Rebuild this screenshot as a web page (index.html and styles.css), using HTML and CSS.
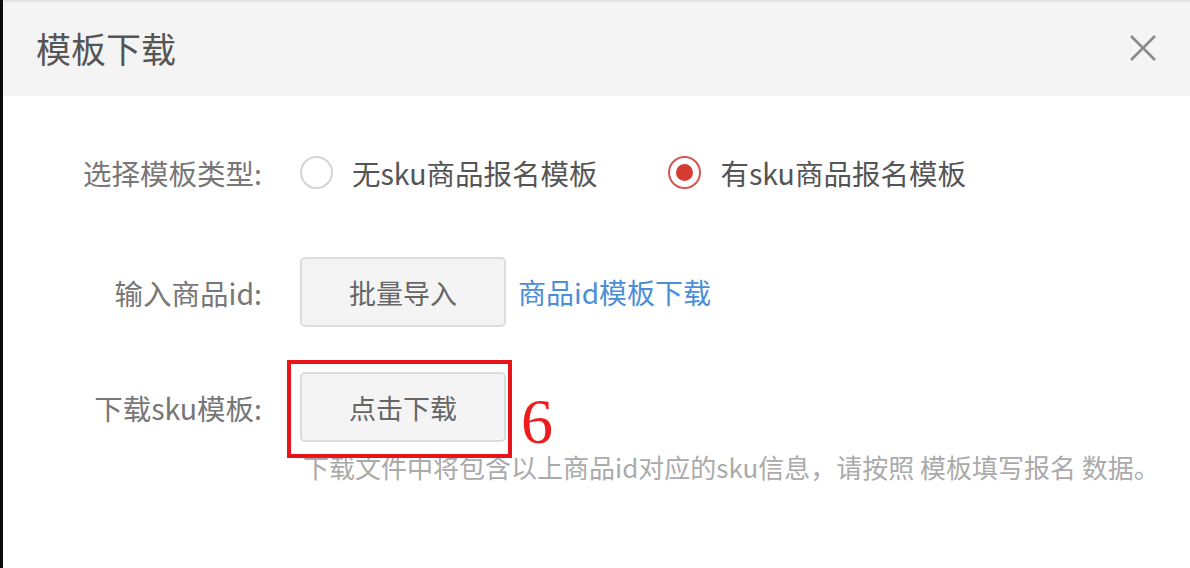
FILE: index.html
```html
<!DOCTYPE html>
<html lang="zh-CN">
<head>
<meta charset="utf-8">
<title>模板下载</title>
<link rel="stylesheet" href="styles.css">
</head>
<body>
<div class="dialog">
  <div class="header">
    <span class="title">模板下载</span>
    <svg class="close" width="28" height="28" viewBox="0 0 28 28"><path d="M2 2 L26 26 M26 2 L2 26" stroke="#8a8a8a" stroke-width="2.6" fill="none"/></svg>
  </div>
  <div class="body">
    <div class="row row1">
      <div class="label">选择模板类型:</div>
      <div class="controls">
        <span class="radio"></span><span class="opt">无sku商品报名模板</span>
        <span class="radio checked"></span><span class="opt">有sku商品报名模板</span>
      </div>
    </div>
    <div class="row row2">
      <div class="label">输入商品id:</div>
      <div class="controls">
        <span class="btn">批量导入</span><span class="link">商品id模板下载</span>
      </div>
    </div>
    <div class="row row3">
      <div class="label">下载sku模板:</div>
      <div class="controls">
        <span class="btn-wrap"><span class="btn">点击下载</span><span class="mark"></span><span class="num">6</span></span>
      </div>
    </div>
    <div class="hint">下载文件中将包含以上商品id对应的sku信息，请按照 模板填写报名 数据。</div>
  </div>
</div>
</body>
</html>
```
FILE: styles.css
```css
html, body { margin: 0; padding: 0; background: #fff; }
body { font-family: "Noto Sans CJK SC", "Noto Sans", sans-serif; }
.dialog { width: 1187px; height: 568px; border-left: 3px solid #0b0b0b; overflow: hidden; }
.header { height: 94px; border-top: 2px solid #e3e3e3; background: #f4f4f4; display: flex; align-items: center; justify-content: space-between; padding: 0 33px 0 33px; box-sizing: content-box; }
.title { font-size: 35px; color: #555; line-height: 1; margin-top: -4px; }
.close { margin-top: -2px; }
.body { padding-top: 41px; }
.row { display: flex; align-items: center; height: 70px; }
.row2 { margin-top: 50px; }
.row3 { margin-top: 45px; }
.label { width: 259px; text-align: right; font-size: 28.5px; color: #777; }
.controls { display: flex; align-items: center; margin-left: 38px; }
.radio { width: 29px; height: 29px; border: 2px solid #d4d4d4; border-radius: 50%; box-sizing: content-box; position: relative; }
.radio.checked { border-color: #d8554e; margin-left: 71px; }
.radio.checked::after { content: ""; position: absolute; left: 6px; top: 6px; width: 17px; height: 17px; border-radius: 50%; background: #d43c33; }
.opt { font-size: 28.5px; color: #555; margin-left: 19px; }
.btn { display: inline-flex; align-items: center; justify-content: center; width: 202px; height: 66px; border: 2px solid #dcdcdc; border-radius: 5px; background: #f4f4f4; font-size: 27px; color: #666; }
.link { font-size: 28px; color: #4a8fd8; margin-left: 12px; }
.btn-wrap { position: relative; display: inline-block; }
.mark { position: absolute; left: -13px; top: -12px; width: 217px; height: 90px; border: 4px solid #e8141a; }
.num { position: absolute; left: 221px; top: 26px; height: 48px; font-family: "Liberation Serif", serif; font-size: 64px; line-height: 48px; color: #ee1c1c; }
.hint { margin-top: 10px; padding-left: 300px; font-size: 26px; line-height: 30px; color: #aaa; }
```
